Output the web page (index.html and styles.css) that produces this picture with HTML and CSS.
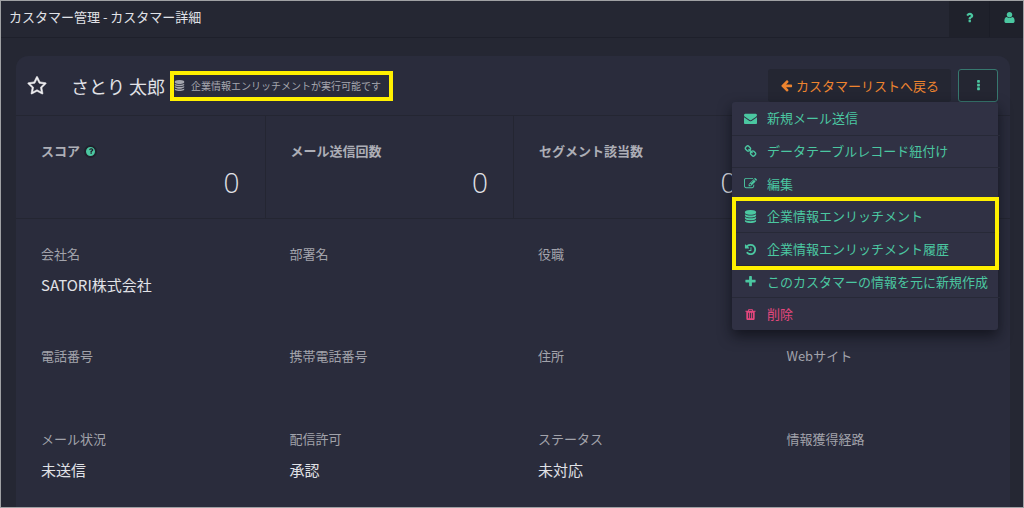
FILE: index.html
```html
<!DOCTYPE html>
<html lang="ja">
<head>
<meta charset="utf-8">
<meta name="viewport" content="width=device-width, initial-scale=1">
<title>カスタマー管理 - カスタマー詳細</title>
<link rel="stylesheet" href="styles.css">
</head>
<body>
<svg class="sprite" aria-hidden="true">
  <symbol id="i-question" viewBox="0 0 1792 1792"><path d="M1088 1256v240q0 16-12 28t-28 12h-240q-16 0-28-12t-12-28v-240q0-16 12-28t28-12h240q16 0 28 12t12 28zm316-600q0 54-15.5 101t-35 76.5-55 59.5-57.5 43.5-61 35.5q-41 23-68.5 65t-27.5 67q0 17-12 32.5t-28 15.5h-240q-15 0-25.5-18.5t-10.5-37.5v-45q0-83 65-156.5t143-108.5q59-27 84-56t25-76q0-42-46.5-74t-107.5-32q-65 0-108 29-35 25-107 115-13 16-31 16-12 0-25-8l-164-125q-13-10-15.5-25t5.5-28q160-266 464-266 80 0 161 31t146 83 106 127.5 41 158.5z"/></symbol>
  <symbol id="i-user" viewBox="0 0 1792 1792"><path d="M1600 1405q0 120-73 189.5t-194 69.5h-874q-121 0-194-69.5t-73-189.5q0-53 3.5-103.5t14-109 26.5-108.5 43-97.5 62-81 85.5-53.5 111.5-20q9 0 42 21.5t74.5 48 108 48 133.5 21.5 133.5-21.5 108-48 74.5-48 42-21.5q61 0 111.5 20t85.5 53.5 62 81 43 97.5 26.5 108.5 14 109 3.5 103.5zm-320-893q0 159-112.5 271.5t-271.5 112.5-271.5-112.5-112.5-271.5 112.5-271.5 271.5-112.5 271.5 112.5 112.5 271.5z"/></symbol>
  <symbol id="i-star" viewBox="0 0 1792 1792"><path d="M1201 1004l306-297-422-62-189-382-189 382-422 62 306 297-73 421 378-199 377 199zm527-357q0 22-26 48l-363 354 86 500q1 7 1 20 0 50-41 50-19 0-40-12l-449-236-449 236q-22 12-40 12-21 0-31.5-14.5t-10.5-35.5q0-6 2-20l86-500-364-354q-25-27-25-48 0-37 56-46l502-73 225-455q19-41 49-41t49 41l225 455 502 73q56 9 56 46z"/></symbol>
  <symbol id="i-database" viewBox="0 0 1792 1792"><path d="M896 768q237 0 443-43t325-127v170q0 69-103 128t-280 93.5-385 34.5-385-34.5-280-93.5-103-128v-170q119 84 325 127t443 43zm0 768q237 0 443-43t325-127v170q0 69-103 128t-280 93.5-385 34.5-385-34.5-280-93.5-103-128v-170q119 84 325 127t443 43zm0-384q237 0 443-43t325-127v170q0 69-103 128t-280 93.5-385 34.5-385-34.5-280-93.5-103-128v-170q119 84 325 127t443 43zm0-1152q208 0 385 34.5t280 93.5 103 128v128q0 69-103 128t-280 93.5-385 34.5-385-34.5-280-93.5-103-128v-128q0-69 103-128t280-93.5 385-34.5z"/></symbol>
  <symbol id="i-arrow-left" viewBox="0 0 1792 1792"><path d="M1664 896v128q0 53-32.5 90.5t-84.5 37.5h-704l293 294q38 36 38 90t-38 90l-75 76q-37 37-90 37-52 0-91-37l-651-652q-37-37-37-90 0-52 37-91l651-650q38-38 91-38 52 0 90 38l75 74q38 38 38 91t-38 91l-293 293h704q52 0 84.5 37.5t32.5 90.5z"/></symbol>
  <symbol id="i-more" viewBox="0 0 1792 1792"><path d="M1088 1248v192q0 40-28 68t-68 28h-192q-40 0-68-28t-28-68v-192q0-40 28-68t68-28h192q40 0 68 28t28 68zm0-512v192q0 40-28 68t-68 28h-192q-40 0-68-28t-28-68v-192q0-40 28-68t68-28h192q40 0 68 28t28 68zm0-512v192q0 40-28 68t-68 28h-192q-40 0-68-28t-28-68v-192q0-40 28-68t68-28h192q40 0 68 28t28 68z"/></symbol>
  <symbol id="i-envelope" viewBox="0 0 1792 1792"><path d="M1792 710v794q0 66-47 113t-113 47h-1472q-66 0-113-47t-47-113v-794q44 49 101 87 362 246 497 345 57 42 92.5 65.5t94.5 48 110 24.5h2q51 0 110-24.5t94.5-48 92.5-65.5q170-123 498-345 57-39 100-87zm0-294q0 79-49 151t-122 123q-376 261-468 325-10 7-42.5 31t-54 38.5-52 32.5-57.5 27-50 9h-2q-23 0-50-9t-57.5-27-52-32.5-54-38.5-42.5-31q-91-64-262-182.5t-205-142.5q-62-42-117-115.5t-55-136.5q0-78 41.5-130t118.5-52h1472q65 0 112.5 47t47.5 113z"/></symbol>
  <symbol id="i-link" viewBox="0 0 1792 1792"><path d="M1520 1216q0-40-28-68l-208-208q-28-28-68-28-42 0-72 32 3 3 19 18.5t21.5 21.5 15 19 13 25.5 3.5 27.5q0 40-28 68t-68 28q-15 0-27.5-3.5t-25.5-13-19-15-21.5-21.5-18.5-19q-33 31-33 73 0 40 28 68l206 207q27 27 68 27 40 0 68-26l147-146q28-28 28-67zm-703-705q0-40-28-68l-206-207q-28-28-68-28-39 0-68 27l-147 146q-28 28-28 67 0 40 28 68l208 208q27 27 68 27 42 0 72-31-3-3-19-18.5t-21.5-21.5-15-19-13-25.5-3.5-27.5q0-40 28-68t68-28q15 0 27.5 3.5t25.5 13 19 15 21.5 21.5 18.5 19q33-31 33-73zm895 705q0 120-85 203l-147 146q-83 83-203 83-121 0-204-85l-206-207q-83-83-83-203 0-123 88-209l-88-88q-86 88-208 88-120 0-204-84l-208-208q-84-84-84-204t85-203l147-146q83-83 203-83 121 0 204 85l206 207q83 83 83 203 0 123-88 209l88 88q86-88 208-88 120 0 204 84l208 208q84 84 84 204z"/></symbol>
  <symbol id="i-edit" viewBox="0 0 1792 1792"><path d="M888 1184l116-116-152-152-116 116v56h96v96h56zm440-720q-16-16-33 1l-350 350q-17 17-1 33t33-1l350-350q17-17 1-33zm80 594v190q0 119-84.5 203.5t-203.5 84.5h-832q-119 0-203.5-84.5t-84.5-203.5v-832q0-119 84.5-203.5t203.5-84.5h832q63 0 117 25 15 7 18 23 3 17-9 29l-49 49q-14 14-32 8-23-6-45-6h-832q-66 0-113 47t-47 113v832q0 66 47 113t113 47h832q66 0 113-47t47-113v-126q0-13 9-22l64-64q15-15 35-7t20 29zm-96-738l288 288-672 672h-288v-288zm444 132l-92 92-288-288 92-92q28-28 68-28t68 28l152 152q28 28 28 68t-28 68z"/></symbol>
  <symbol id="i-history" viewBox="0 0 1792 1792"><path d="M1664 896q0 156-61 298t-164 245-245 164-298 61q-172 0-327-72.5t-264-204.5q-7-10-6.5-22.5t8.5-20.5l137-138q10-9 25-9 16 2 23 12 73 95 179 147t225 52q104 0 198.5-40.5t163.5-109.5 109.5-163.5 40.5-198.5-40.5-198.5-109.5-163.5-163.5-109.5-198.5-40.5q-98 0-188 35.5t-160 101.5l137 138q31 30 14 69-17 40-59 40h-448q-26 0-45-19t-19-45v-448q0-42 40-59 39-17 69 14l130 129q107-101 244.5-156.5t284.5-55.5q156 0 298 61t245 164 164 245 61 298zm-640-288v448q0 14-9 23t-23 9h-320q-14 0-23-9t-9-23v-64q0-14 9-23t23-9h224v-352q0-14 9-23t23-9h64q14 0 23 9t9 23z"/></symbol>
  <symbol id="i-plus" viewBox="0 0 1792 1792"><path d="M1600 736v192q0 40-28 68t-68 28h-416v416q0 40-28 68t-68 28h-192q-40 0-68-28t-28-68v-416h-416q-40 0-68-28t-28-68v-192q0-40 28-68t68-28h416v-416q0-40 28-68t68-28h192q40 0 68 28t28 68v416h416q40 0 68 28t28 68z"/></symbol>
  <symbol id="i-trash" viewBox="0 0 1792 1792"><path d="M704 1376v-704q0-14-9-23t-23-9h-64q-14 0-23 9t-9 23v704q0 14 9 23t23 9h64q14 0 23-9t9-23zm256 0v-704q0-14-9-23t-23-9h-64q-14 0-23 9t-9 23v704q0 14 9 23t23 9h64q14 0 23-9t9-23zm256 0v-704q0-14-9-23t-23-9h-64q-14 0-23 9t-9 23v704q0 14 9 23t23 9h64q14 0 23-9t9-23zm-544-992h448l-48-117q-7-9-17-11h-317q-10 2-17 11zm928 32v64q0 14-9 23t-23 9h-96v948q0 83-47 143.5t-113 60.5h-832q-66 0-113-58.5t-47-141.5v-952h-96q-14 0-23-9t-9-23v-64q0-14 9-23t23-9h309l70-167q15-37 54-63t79-26h320q40 0 79 26t54 63l70 167h309q14 0 23 9t9 23z"/></symbol>
</svg>

<div class="app">
  <header class="topbar">
    <h1 class="topbar-title">カスタマー管理 - カスタマー詳細</h1>
    <nav class="topbar-nav">
      <button class="topbar-button" type="button" aria-label="ヘルプ"><svg class="icon"><use href="#i-question"/></svg></button>
      <button class="topbar-button" type="button" aria-label="アカウント"><svg class="icon"><use href="#i-user"/></svg></button>
    </nav>
  </header>

  <main class="card">
    <div class="card-header">
      <button class="star" type="button" aria-label="お気に入り"><svg class="icon icon-large"><use href="#i-star"/></svg></button>
      <h2 class="name">さとり 太郎</h2>
      <span class="notice"><svg class="icon icon-small"><use href="#i-database"/></svg>企業情報エンリッチメントが実行可能です</span>
      <div class="actions">
        <a class="back" href="#"><svg class="icon"><use href="#i-arrow-left"/></svg>カスタマーリストへ戻る</a>
        <button class="more" type="button" aria-label="メニュー" aria-expanded="true"><svg class="icon"><use href="#i-more"/></svg></button>
        <div class="menu">
          <a class="menu-item" href="#"><svg class="icon"><use href="#i-envelope"/></svg>新規メール送信</a>
          <a class="menu-item" href="#"><svg class="icon"><use href="#i-link"/></svg>データテーブルレコード紐付け</a>
          <a class="menu-item" href="#"><svg class="icon"><use href="#i-edit"/></svg>編集</a>
          <a class="menu-item" href="#"><svg class="icon"><use href="#i-database"/></svg>企業情報エンリッチメント</a>
          <a class="menu-item" href="#"><svg class="icon"><use href="#i-history"/></svg>企業情報エンリッチメント履歴</a>
          <a class="menu-item" href="#"><svg class="icon"><use href="#i-plus"/></svg>このカスタマーの情報を元に新規作成</a>
          <a class="menu-item danger" href="#"><svg class="icon"><use href="#i-trash"/></svg>削除</a>
          <span class="menu-highlight"></span>
        </div>
      </div>
    </div>

    <section class="scores">
      <div class="score"><h3 class="score-label">スコア<button class="hint" type="button" aria-label="スコアについて"><svg class="hint-icon"><use href="#i-question"/></svg></button></h3><p class="score-value">0</p></div>
      <div class="score"><h3 class="score-label">メール送信回数</h3><p class="score-value">0</p></div>
      <div class="score"><h3 class="score-label">セグメント該当数</h3><p class="score-value">0</p></div>
      <div class="score"></div>
    </section>

    <dl class="details">
      <div class="field"><dt class="label">会社名</dt><dd class="value">SATORI株式会社</dd></div>
      <div class="field"><dt class="label">部署名</dt></div>
      <div class="field"><dt class="label">役職</dt></div>
      <div class="field"></div>
      <div class="field"><dt class="label">電話番号</dt></div>
      <div class="field"><dt class="label">携帯電話番号</dt></div>
      <div class="field"><dt class="label">住所</dt></div>
      <div class="field"><dt class="label">Webサイト</dt></div>
      <div class="field"><dt class="label">メール状況</dt><dd class="value">未送信</dd></div>
      <div class="field"><dt class="label">配信許可</dt><dd class="value">承認</dd></div>
      <div class="field"><dt class="label">ステータス</dt><dd class="value">未対応</dd></div>
      <div class="field"><dt class="label">情報獲得経路</dt></div>
    </dl>
  </main>
</div>
</body>
</html>
```

FILE: styles.css
```css
* { box-sizing: border-box; }

body, h1, h2, h3, p, dl, dd { margin: 0; }

body {
  background: #252733;
  color: #e1e2e7;
  font: 13px/20px "Noto Sans CJK JP", sans-serif;
}

button {
  border: 0;
  padding: 0;
  background: none;
  color: inherit;
  font: inherit;
}

a { color: inherit; text-decoration: none; }

.sprite { position: absolute; width: 0; height: 0; }

.icon {
  display: block;
  flex: none;
  width: 13px;
  height: 13px;
  fill: currentColor;
}
.icon-large {
  width: 20px;
  height: 20px;
  stroke: currentColor;
  stroke-width: 50;
}
.icon-small { width: 11px; height: 11px; }

.app {
  height: 100vh;
  overflow: hidden;
  border: 1px solid #a0a1a4;
}

.topbar {
  display: flex;
  height: 37px;
  align-items: center;
  justify-content: space-between;
  padding-left: 8px;
  border-bottom: 1px solid #1e202b;
}
.topbar-title {
  padding-bottom: 4px;
  font-size: 13px;
  font-weight: 400;
}
.topbar-nav { display: flex; align-self: stretch; }
.topbar-button {
  display: flex;
  width: 40px;
  padding-bottom: 4px;
  align-items: center;
  justify-content: center;
  background: #1f212b;
  color: #4bc7a1;
}
.topbar-button + .topbar-button {
  width: 34px;
  padding-left: 5px;
  border-left: 1px solid #1b1d27;
}

.card {
  margin: 18px 13px 0 15px;
  border-radius: 12px;
  background: #2a2c3c;
}

.card-header {
  display: flex;
  height: 60px;
  align-items: center;
  padding: 0 12px 0 11px;
  border-bottom: 1px solid #242632;
}
.star { margin-right: 24px; color: #f0f0f3; }
.name {
  color: #e1e2e7;
  font-size: 18px;
  font-weight: 400;
}
.notice {
  display: flex;
  height: 30px;
  margin-left: 5px;
  align-items: center;
  gap: 6px;
  padding-right: 8px;
  border: 4px solid #fff000;
  color: #a5a6ae;
  font-size: 10px;
}
.actions {
  position: relative;
  display: flex;
  margin-left: auto;
  gap: 7px;
}
.back {
  display: flex;
  height: 33px;
  align-items: center;
  gap: 3px;
  padding: 0 12px;
  border-radius: 3px;
  background: #242632;
  color: #ee842f;
}
.more {
  display: flex;
  width: 40px;
  height: 33px;
  align-items: center;
  justify-content: center;
  border: 1px solid #37786f;
  border-radius: 3px;
  background: #242632;
  color: #4bc7a1;
}

.menu {
  position: absolute;
  top: 100%;
  right: 0;
  z-index: 1;
  display: grid;
  width: 266px;
  height: 228px;
  grid-auto-rows: 1fr;
  border-radius: 3px;
  background: #303144;
  color: #4bc7a1;
  box-shadow: 0 6px 14px rgba(10, 11, 18, 0.7);
}
.menu-item {
  display: flex;
  align-items: center;
  gap: 10px;
  padding: 0 12px;
  white-space: nowrap;
}
.menu-item + .menu-item { border-top: 1px solid #272937; }
.danger { color: #e4477d; }
.menu-highlight {
  position: absolute;
  top: 95px;
  right: -1px;
  left: 0;
  height: 73px;
  border: 4px solid #fff000;
  pointer-events: none;
}

.scores, .details {
  display: grid;
  grid-template-columns: repeat(4, 1fr);
}
.scores { border-bottom: 1px solid #242632; }
.score {
  height: 102px;
  padding: 25px 25px 0;
}
.score + .score { border-left: 1px solid #242632; }
.score-label {
  display: flex;
  align-items: center;
  gap: 4px;
  color: #adaeb6;
  font-size: 13px;
  font-weight: 700;
}
.hint {
  display: flex;
  width: 13px;
  height: 13px;
  align-items: center;
  justify-content: center;
  border: 2px solid #20222d;
  border-radius: 50%;
  background: #4bc7a1;
  color: #20222d;
}
.hint-icon {
  width: 8px;
  height: 8px;
  fill: currentColor;
}
.score-value {
  margin-top: 5px;
  font-family: "Open Sans", "Noto Sans", sans-serif;
  font-size: 28px;
  font-weight: 300;
  line-height: 32px;
  text-align: right;
}

.details { padding-top: 25px; }
.field {
  min-height: 83px;
  padding: 0 25px;
}
.label { color: #a2a3ab; }
.value {
  padding: 11px 0 51px;
  font-size: 15px;
}
```
